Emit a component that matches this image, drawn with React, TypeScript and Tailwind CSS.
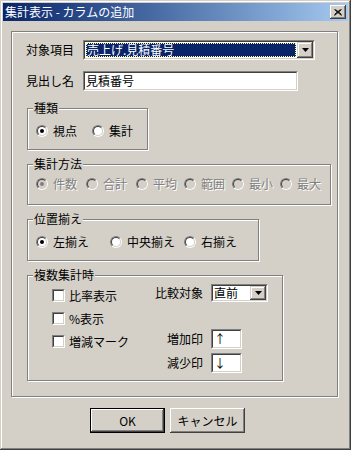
import React from 'react';

const font = "font-['Noto_Sans_CJK_JP','Noto_Sans',sans-serif]";

const Radio = ({ checked, disabled }: { checked?: boolean; disabled?: boolean }) => (
  <span className="block w-[12px] h-[12px] shrink-0 rounded-full border border-t-[#808080] border-l-[#808080] border-r-white border-b-white">
    <span
      className={`flex items-center justify-center w-full h-full rounded-full border border-t-[#404040] border-l-[#404040] border-r-[#d4d0c8] border-b-[#d4d0c8] ${
        disabled ? 'bg-[#d4d0c8]' : 'bg-white'
      }`}
    >
      {checked && <span className={`block w-[4px] h-[4px] rounded-full ${disabled ? 'bg-[#808080]' : 'bg-black'}`} />}
    </span>
  </span>
);

const Check = () => (
  <span className="block w-[13px] h-[13px] shrink-0 border border-t-[#808080] border-l-[#808080] border-r-white border-b-white">
    <span className="block w-full h-full bg-white border border-t-[#404040] border-l-[#404040] border-r-[#d4d0c8] border-b-[#d4d0c8]" />
  </span>
);

const DropButton = ({ h }: { h: string }) => (
  <span className={`flex items-center justify-center w-[16px] ${h} shrink-0 bg-[#d4d0c8] shadow-[inset_-1px_-1px_0_#404040,inset_1px_1px_0_#d4d0c8,inset_-2px_-2px_0_#808080,inset_2px_2px_0_#fff]`}>
    <svg width="7" height="4" viewBox="0 0 7 4">
      <path d="M0 0h7L3.5 4z" fill="#000" />
    </svg>
  </span>
);

const Group = ({ title, className, children }: { title: string; className: string; children?: React.ReactNode }) => (
  <div className={`relative border border-[#808080] shadow-[inset_1px_1px_0_#fff,1px_1px_0_#fff] ${className}`}>
    <span className="absolute left-[5px] top-[-8px] bg-[#d4d0c8] px-[1px] leading-[14px]">{title}</span>
    {children}
  </div>
);

const RadioItem = ({ label, checked, disabled, w }: { label: string; checked?: boolean; disabled?: boolean; w: string }) => (
  <div className={`flex items-center gap-[5px] ${w}`}>
    <Radio checked={checked} disabled={disabled} />
    <span className={disabled ? 'text-[#808080] [text-shadow:1px_1px_0_#fff]' : ''}>{label}</span>
  </div>
);

const CheckItem = ({ label }: { label: string }) => (
  <div className="flex items-center gap-[4px] h-[13px]">
    <Check />
    <span>{label}</span>
  </div>
);

const Button = ({ label, primary }: { label: string; primary?: boolean }) => (
  <button
    className={`w-[75px] h-[25px] bg-[#d4d0c8] text-black text-[12px] leading-[14px] ${
      primary
        ? 'border border-black shadow-[inset_-1px_-1px_0_#404040,inset_1px_1px_0_#fff,inset_-2px_-2px_0_#808080]'
        : 'shadow-[inset_-1px_-1px_0_#404040,inset_1px_1px_0_#fff,inset_-2px_-2px_0_#808080,inset_2px_2px_0_#d4d0c8]'
    }`}
  >
    {label}
  </button>
);

export default function App() {
  return (
    <div className={`${font} text-[12px] leading-[14px] text-black w-[351px] h-[450px] bg-[#d4d0c8] p-[3px] flex flex-col shadow-[inset_-1px_-1px_0_#404040,inset_1px_1px_0_#d4d0c8,inset_-2px_-2px_0_#808080,inset_2px_2px_0_#fff]`}>
      {/* Title bar */}
      <div className="h-[18px] shrink-0 flex items-center justify-between pl-[2px] pr-[2px] bg-gradient-to-r from-[#0a246a] to-[#a6caf0]">
        <span className="text-white">集計表示 - カラムの追加</span>
        <span className="flex items-center justify-center w-[16px] h-[14px] bg-[#d4d0c8] shadow-[inset_-1px_-1px_0_#404040,inset_1px_1px_0_#fff,inset_-2px_-2px_0_#808080]">
          <svg width="8" height="7" viewBox="0 0 8 7">
            <path d="M0.5 0.5L7.5 6.5M1.5 0.5L7.5 5.5M7.5 0.5L0.5 6.5M6.5 0.5L0.5 5.5" stroke="#000" strokeWidth="1" />
          </svg>
        </span>
      </div>

      {/* Main panel */}
      <div className="ml-[8px] mt-[10px] w-[327px] h-[366px] shrink-0 border border-[#808080] shadow-[inset_1px_1px_0_#fff,1px_1px_0_#fff] pl-[15px] pt-[8px]">
        {/* 対象項目 */}
        <div className="flex items-center -ml-px">
          <span className="w-[57px]">対象項目</span>
          <div className="w-[232px] h-[20px] border border-t-[#808080] border-l-[#808080] border-r-white border-b-white">
            <div className="flex w-full h-full bg-white border border-t-[#404040] border-l-[#404040] border-r-[#d4d0c8] border-b-[#d4d0c8]">
              <div className="flex-1 p-[1px]">
                <div className="h-full bg-[#0a246a] text-white flex items-center pl-[1px] outline-1 outline-dotted outline-[#ffff80] -outline-offset-1">
                  売上げ.見積番号
                </div>
              </div>
              <DropButton h="h-[16px]" />
            </div>
          </div>
        </div>

        {/* 見出し名 */}
        <div className="flex items-center -ml-px mt-[11px]">
          <span className="w-[57px]">見出し名</span>
          <div className="w-[215px] h-[20px] border border-t-[#808080] border-l-[#808080] border-r-white border-b-white">
            <div className="w-full h-full bg-white border border-t-[#404040] border-l-[#404040] border-r-[#d4d0c8] border-b-[#d4d0c8] flex items-center pl-[1px]">
              見積番号
            </div>
          </div>
        </div>

        {/* 種類 */}
        <Group title="種類" className="mt-[17px] w-[121px] h-[42px]">
          <div className="flex items-center h-[14px] mt-[15px] pl-[8px]">
            <RadioItem label="視点" checked w="w-[56px]" />
            <RadioItem label="集計" w="w-[50px]" />
          </div>
        </Group>

        {/* 集計方法 */}
        <Group title="集計方法" className="mt-[14px] w-[304px] h-[41px]">
          <div className="flex items-center h-[14px] mt-[12px] pl-[8px]">
            <RadioItem label="件数" checked disabled w="w-[50px]" />
            <RadioItem label="合計" disabled w="w-[50px]" />
            <RadioItem label="平均" disabled w="w-[48px]" />
            <RadioItem label="範囲" disabled w="w-[48px]" />
            <RadioItem label="最小" disabled w="w-[48px]" />
            <RadioItem label="最大" disabled w="w-[44px]" />
          </div>
        </Group>

        {/* 位置揃え */}
        <Group title="位置揃え" className="mt-[14px] w-[232px] h-[42px]">
          <div className="flex items-center h-[14px] mt-[15px] pl-[8px]">
            <RadioItem label="左揃え" checked w="w-[74px]" />
            <RadioItem label="中央揃え" w="w-[74px]" />
            <RadioItem label="右揃え" w="w-[70px]" />
          </div>
        </Group>

        {/* 複数集計時 */}
        <Group title="複数集計時" className="mt-[14px] w-[256px] h-[106px]">
          <div className="flex pl-[24px]">
            <div className="w-[103px] pt-[13px] flex flex-col gap-[10px]">
              <CheckItem label="比率表示" />
              <CheckItem label="%表示" />
              <CheckItem label="増減マーク" />
            </div>
            <div className="pt-[8px] grid grid-cols-[48px_auto] gap-x-[8px] items-center">
              <span className="text-right">比較対象</span>
              <div className="w-[57px] h-[18px] border border-t-[#808080] border-l-[#808080] border-r-white border-b-white">
                <div className="flex w-full h-full bg-white border border-t-[#404040] border-l-[#404040] border-r-[#d4d0c8] border-b-[#d4d0c8]">
                  <div className="flex-1 flex items-center pl-[1px]">直前</div>
                  <DropButton h="h-[14px]" />
                </div>
              </div>
              <span className="text-right mt-[27px]">増加印</span>
              <div className="mt-[27px] w-[31px] h-[20px] border border-t-[#808080] border-l-[#808080] border-r-white border-b-white">
                <div className="w-full h-full bg-white border border-t-[#404040] border-l-[#404040] border-r-[#d4d0c8] border-b-[#d4d0c8] flex items-center pl-[1px]">
                  ↑
                </div>
              </div>
              <span className="text-right mt-[4px]">減少印</span>
              <div className="mt-[4px] w-[31px] h-[20px] border border-t-[#808080] border-l-[#808080] border-r-white border-b-white">
                <div className="w-full h-full bg-white border border-t-[#404040] border-l-[#404040] border-r-[#d4d0c8] border-b-[#d4d0c8] flex items-center pl-[1px]">
                  ↓
                </div>
              </div>
            </div>
          </div>
        </Group>
      </div>

      {/* Buttons */}
      <div className="flex gap-[5px] ml-[87px] mt-[11px]">
        <Button label="OK" primary />
        <Button label="キャンセル" />
      </div>
    </div>
  );
}
